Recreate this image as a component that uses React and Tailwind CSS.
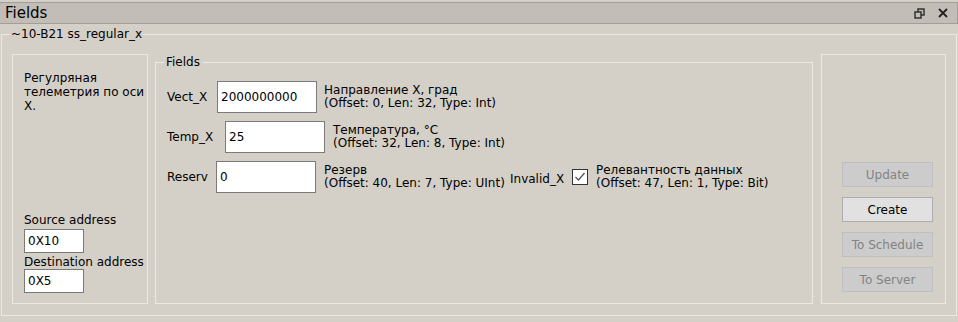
import React from "react";

const FONT = "font-['DejaVu_Sans','Noto_Sans',sans-serif]";

function TextBox({ value, className = "" }) {
  return (
    <div className={`flex items-center border border-[#7a7a7a] bg-white px-[3px] text-[12px] text-black ${className}`}>
      {value}
    </div>
  );
}

function FieldDesc({ title, meta }) {
  return (
    <div className="whitespace-nowrap text-[12px] leading-[13px] text-black">
      <div>{title}</div>
      <div>{meta}</div>
    </div>
  );
}

function ActionButton({ label, enabled }) {
  return (
    <button
      type="button"
      className={`h-[25px] w-[91px] border text-[12px] ${
        enabled ? "border-[#adadad] bg-[#e1e1e1] text-black" : "border-[#bfbfbf] bg-[#cccccc] text-[#838383]"
      }`}
    >
      {label}
    </button>
  );
}

export default function App() {
  return (
    <div className={`h-[322px] w-[958px] overflow-hidden bg-[#d4d0c8] text-black ${FONT}`}>
      <div className="mt-[2px] flex h-[22px] items-center justify-between border-y border-r border-[#a19d98] bg-[#c2bdb6] pl-[5px] pr-[9px]">
        <span className="text-[15px] leading-none">Fields</span>
        <div className="flex items-center gap-[13px]">
          <svg width="11" height="11" viewBox="0 0 11 11" fill="none" stroke="#333" strokeWidth="1.5">
            <rect x="1" y="4" width="6" height="6" />
            <path d="M4 4V1h6v6H7" />
          </svg>
          <svg width="10" height="10" viewBox="0 0 10 10" stroke="#222" strokeWidth="1.8">
            <path d="M1 1l8 8M9 1l-8 8" />
          </svg>
        </div>
      </div>

      <div className="relative ml-[1px] mr-[1px] mt-[10px] h-[282px] border border-[#ebe9e4] px-[10px] pb-[11px] pt-[19px]">
        <span className="absolute left-[8px] top-[-9px] bg-[#d4d0c8] px-[1px] text-[12px] leading-[16px]">~10-B21 ss_regular_x</span>

        <div className="flex h-full gap-[7px]">
          <div className="flex w-[136px] flex-col justify-between whitespace-nowrap border border-[#ebe9e4] px-[11px] pb-[10px] pt-[16px]">
            <div className="text-[12px] leading-[14px]">
              <div>Регулряная</div>
              <div>телеметрия по оси</div>
              <div>X.</div>
            </div>
            <div className="flex flex-col">
              <span className="text-[12px] leading-[14px]">Source address</span>
              <TextBox value="0X10" className="mt-[2px] h-[24px] w-[60px]" />
              <span className="mt-[2px] text-[12px] leading-[14px]">Destination address</span>
              <TextBox value="0X5" className="h-[24px] w-[60px]" />
            </div>
          </div>

          <div className="relative mt-[8px] flex w-[658px] flex-col gap-[8px] border border-[#ebe9e4] pl-[11px] pt-[18px]">
            <span className="absolute left-[8px] top-[-9px] bg-[#d4d0c8] px-[2px] text-[12px] leading-[16px]">Fields</span>

            <div className="flex items-center">
              <span className="w-[50px] text-[12px]">Vect_X</span>
              <TextBox value="2000000000" className="h-[32px] w-[100px]" />
              <div className="ml-[7px]">
                <FieldDesc title="Направление X, град" meta="(Offset: 0, Len: 32, Type: Int)" />
              </div>
            </div>

            <div className="flex items-center">
              <span className="w-[58px] text-[12px]">Temp_X</span>
              <TextBox value="25" className="h-[32px] w-[100px]" />
              <div className="ml-[8px]">
                <FieldDesc title="Температура, °C" meta="(Offset: 32, Len: 8, Type: Int)" />
              </div>
            </div>

            <div className="flex items-center">
              <span className="w-[49px] text-[12px]">Reserv</span>
              <TextBox value="0" className="h-[32px] w-[100px]" />
              <div className="ml-[8px] w-[186px]">
                <FieldDesc title="Резерв" meta="(Offset: 40, Len: 7, Type: UInt)" />
              </div>
              <span className="mt-[3px] w-[62px] text-[12px]">Invalid_X</span>
              <div className="flex h-[16px] w-[16px] items-center justify-center border border-[#333] bg-white">
                <svg width="12" height="10" viewBox="0 0 12 10" fill="none" stroke="#555" strokeWidth="1.3">
                  <path d="M1.5 5l3 3 6-7" />
                </svg>
              </div>
              <div className="ml-[8px]">
                <FieldDesc title="Релевантность данных" meta="(Offset: 47, Len: 1, Type: Bit)" />
              </div>
            </div>
          </div>

          <div className="ml-[1px] flex w-[125px] flex-col items-center justify-end gap-[10px] border border-[#ebe9e4] pb-[11px] pl-[8px]">
            <ActionButton label="Update" />
            <ActionButton label="Create" enabled />
            <ActionButton label="To Schedule" />
            <ActionButton label="To Server" />
          </div>
        </div>
      </div>
    </div>
  );
}
